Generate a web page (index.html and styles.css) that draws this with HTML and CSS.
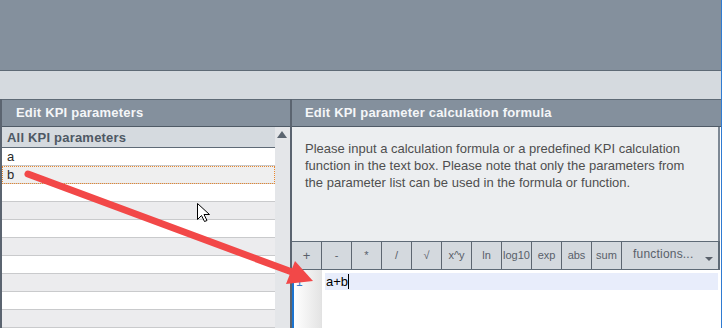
FILE: index.html
```html
<!DOCTYPE html>
<html>
<head>
  <title>Edit KPI parameters</title>
  <meta charset="UTF-8" />
  <link rel="stylesheet" href="styles.css">
</head>
<body>
  <div class="page">
    <div class="topbar"></div>
    <div class="band"></div>

    <div class="panels">
      <!-- Parameter list -->
      <section class="left">
        <div class="panel-head">Edit KPI parameters</div>
        <div class="list-area">
          <div class="list">
            <div class="list-head">All KPI parameters</div>
            <div class="row">a</div>
            <div class="row alt focus">b</div>
            <div class="row"></div>
            <div class="row alt"></div>
            <div class="row"></div>
            <div class="row alt"></div>
            <div class="row"></div>
            <div class="row alt"></div>
            <div class="row"></div>
            <div class="row alt"></div>
          </div>
          <div class="scrollbar"><span class="up"></span></div>
        </div>
      </section>

      <!-- Formula editor -->
      <section class="right">
        <div class="panel-head">Edit KPI parameter calculation formula</div>
        <div class="desc">
          <p>Please input a calculation formula or a predefined KPI calculation function in the text box. Please note that only the parameters from the parameter list can be used in the formula or function.</p>
        </div>
        <div class="toolbar">
          <span class="btn">+</span>
          <span class="btn">-</span>
          <span class="btn">*</span>
          <span class="btn">/</span>
          <span class="btn">&radic;</span>
          <span class="btn">x^y</span>
          <span class="btn">ln</span>
          <span class="btn">log10</span>
          <span class="btn">exp</span>
          <span class="btn">abs</span>
          <span class="btn">sum</span>
          <span class="functions">functions...<span class="drop"></span></span>
        </div>
        <div class="editor">
          <div class="gutter">1</div>
          <div class="code">
            <div class="line">a+b<span class="caret"></span></div>
          </div>
        </div>
      </section>
    </div>

    <!-- annotation arrow and mouse pointer -->
    <svg class="overlay" width="722" height="328" viewBox="0 0 722 328">
      <line x1="28" y1="174" x2="292" y2="272" stroke="#f24848" stroke-width="7" stroke-linecap="round" />
      <polygon points="313,281 295,261 286,284" fill="#f24848" />
      <path d="M197.5 203.5 L197.5 219.5 L201.5 215.5 L204.5 221.5 L207 220.5 L204 214.5 L209.5 214.5 Z" fill="#fff" stroke="#000" stroke-width="1" stroke-linejoin="miter" />
    </svg>
  </div>
</body>
</html>
```

FILE: styles.css
```css
body {
  margin: 0;
  font-family: "Liberation Sans", Arial, sans-serif;
  font-size: 13px;
  letter-spacing: 0.2px;
  background: #fff;
}
.page {
  position: relative;
  width: 721px;
  height: 328px;
  overflow: hidden;
  border-right: 1px solid #2f7bd2;
}
.topbar {
  height: 70px;
  background: #84909d;
  border-bottom: 1px solid #5e6a76;
}
.band {
  height: 28px;
  background: #d5dadf;
}
.panels { display: flex; }

.panel-head {
  height: 26px;
  line-height: 26px;
  background: #84909d;
  border-top: 1px solid #5e6a76;
  border-bottom: 1px solid #4f5a66;
  color: #f4f6f8;
  font-weight: bold;
  white-space: nowrap;
}

/* left side */
.left {
  width: 288px;
  border-left: 2px solid #5b6470;
  border-right: 2px solid #5b6470;
}
.left .panel-head { padding-left: 14px; }
.list-area {
  display: flex;
  height: 201px;
}
.list { width: 273px; }
.list-head {
  height: 20px;
  line-height: 21px;
  background: #d5dadf;
  border-bottom: 1px solid #5e6a76;
  color: #4e5864;
  font-weight: bold;
  padding-left: 5px;
}
.row {
  height: 17px;
  line-height: 17px;
  border-bottom: 1px solid #c9cacc;
  padding-left: 5px;
  color: #2a2a2a;
  background: #fff;
}
.row.alt { background: #ececee; }
.row.focus {
  background: #efefef;
  outline: 1px dotted #e8872e;
  outline-offset: -1px;
}
.scrollbar {
  width: 15px;
  background: #e4e6e9;
}
.up {
  display: block;
  width: 0;
  height: 0;
  margin: 4px 0 0 2px;
  border-left: 5px solid transparent;
  border-right: 5px solid transparent;
  border-bottom: 7px solid #5b6570;
}

/* right side */
.right { flex: 1; }
.right .panel-head { padding-left: 13px; }
.desc {
  height: 101px;
  padding: 13px 0 0 13px;
  background: #eceef0;
  border-right: 2px solid #7d8894;
  margin-right: 1px;
}
.desc p {
  width: 385px;
  margin: 0;
  line-height: 17px;
  letter-spacing: 0;
  color: #4f4f4f;
}
.toolbar {
  display: flex;
  height: 27px;
  background: #d4d9de;
  border-top: 1px solid #5e6a76;
  border-bottom: 1px solid #5e6a76;
  border-right: 2px solid #5e6a76;
  margin-right: 1px;
  color: #59606a;
  letter-spacing: 0;
}
.btn {
  width: 29px;
  border-right: 1px solid #5d6671;
  text-align: center;
  font-size: 11px;
  line-height: 27px;
}
.btn:first-child { font-size: 13px; }
.functions {
  position: relative;
  flex: 1;
  padding-left: 11px;
  font-size: 12px;
  letter-spacing: 0.2px;
  line-height: 25px;
}
.drop {
  position: absolute;
  right: 5px;
  top: 15px;
  width: 0;
  height: 0;
  border-left: 4px solid transparent;
  border-right: 4px solid transparent;
  border-top: 4px solid #59606a;
}
.editor {
  display: flex;
  height: 58px;
}
.gutter {
  width: 25px;
  border-left: 2px solid #1c74d0;
  border-right: 1px solid #e2e2e2;
  background: linear-gradient(to right, #ffffff, #e4e4e4);
  color: #3a7cc9;
  font-size: 12px;
  padding: 4px 0 0 2px;
  line-height: 17px;
}
.code {
  flex: 1;
  padding: 3px 3px 0 3px;
}
.line {
  height: 17px;
  line-height: 17px;
  background: #e8edfb;
  padding-left: 1px;
  letter-spacing: 0;
  color: #000;
}
.caret {
  display: inline-block;
  width: 1px;
  height: 15px;
  background: #000;
  vertical-align: -3px;
}
.overlay {
  position: absolute;
  top: 0;
  left: 0;
  pointer-events: none;
}
```
